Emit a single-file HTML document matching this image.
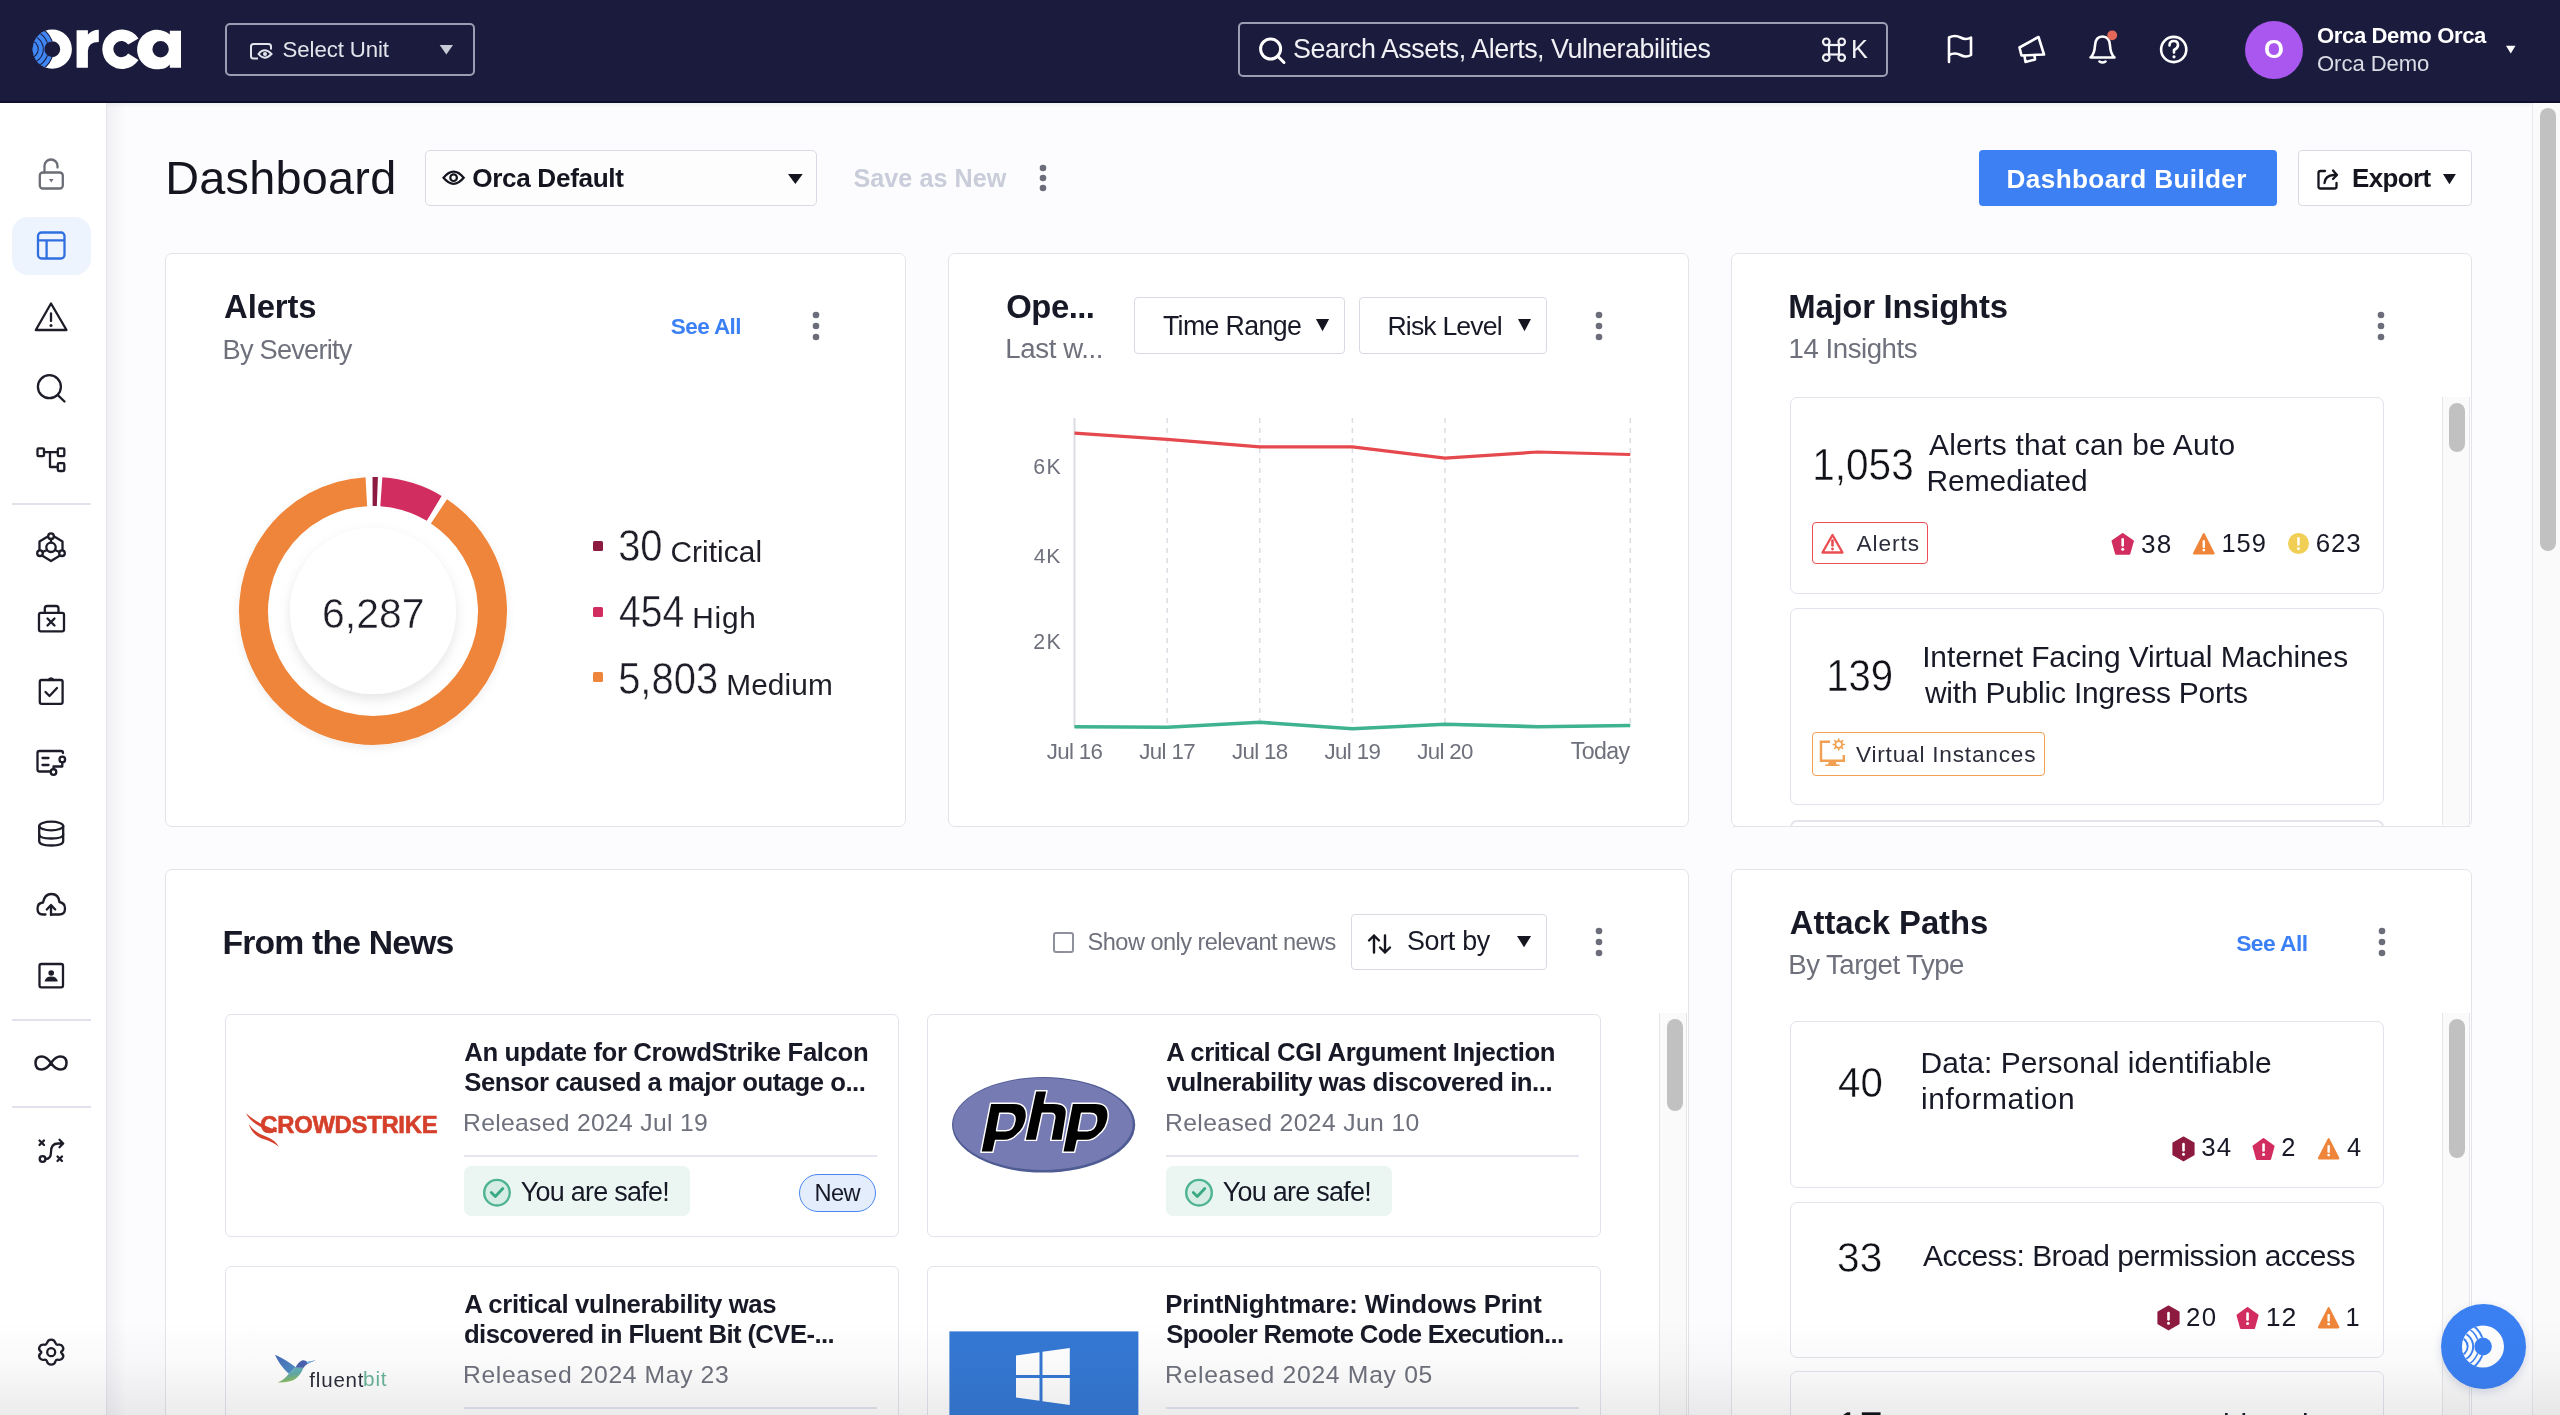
<!DOCTYPE html>
<html><head><meta charset="utf-8"><title>Orca Dashboard</title>
<style>
html,body{margin:0;padding:0;width:2560px;height:1415px;overflow:hidden;background:#fcfcfe}
body{position:relative;font-family:"Liberation Sans",sans-serif}
.a{position:absolute;box-sizing:border-box}
.t{position:absolute;white-space:nowrap;line-height:1;font-family:"Liberation Sans",sans-serif;-webkit-font-smoothing:antialiased}
svg.a{overflow:visible}
</style></head><body>
<div id="root" style="position:absolute;left:0;top:0;width:2560px;height:1415px;will-change:transform">
<div class="a" style="left:0px;top:0px;width:2560px;height:1415px;background:#fcfcfe"></div>
<div class="a" style="left:106px;top:103px;width:20px;height:1312px;background:linear-gradient(90deg,rgba(20,22,60,0.05),rgba(20,22,60,0.0))"></div>
<div class="a" style="left:106px;top:103px;width:2426px;height:5px;background:linear-gradient(180deg,rgba(20,22,60,0.05),rgba(20,22,60,0))"></div>
<div class="a" style="left:0px;top:103px;width:106px;height:1312px;background:#ffffff"></div>
<div class="a" style="left:105.5px;top:103px;width:1.5px;height:1312px;background:#e4e4ea"></div>
<div class="a" style="left:0px;top:0px;width:2560px;height:103px;background:#1b1c3d"></div>
<div class="a" style="left:0px;top:101px;width:2560px;height:2px;background:#0e0f2e"></div>
<div class="a" style="left:2532px;top:103px;width:28px;height:1312px;background:#fafafa;border-left:1.5px solid #e8e8ec"></div>
<div class="a" style="left:2540px;top:108px;width:16px;height:443px;background:#c1c1c1;border-radius:8px"></div>
<svg class="a" style="left:0px;top:0px;" width="200" height="100" viewBox="0 0 200 100">
<defs><clipPath id="lgclip"><path d="M52.3 29.6 A19.6 19.6 0 1 0 52.3 68.8 A19.6 19.6 0 1 0 52.3 29.6 Z M52.2 41.2 A8 8 0 1 1 52.2 57.2 A8 8 0 1 1 52.2 41.2 Z" fill-rule="evenodd" clip-rule="evenodd"/></clipPath>
</defs>
<g clip-path="url(#lgclip)">
  <rect x="30" y="25" width="50" height="50" fill="#ffffff"/>
  <circle cx="29.4" cy="49.2" r="24.6" fill="#1b1c3d"/>
  <circle cx="29.4" cy="49.2" r="23.5" fill="#3f86f6"/>
  <circle cx="29.4" cy="49.2" r="19.6" fill="#1b1c3d"/>
  <circle cx="29.4" cy="49.2" r="18.5" fill="#3f86f6"/>
  <circle cx="29.4" cy="49.2" r="14.4" fill="#1b1c3d"/>
  <circle cx="29.4" cy="49.2" r="13.4" fill="#3f86f6"/>
  <circle cx="29.4" cy="49.2" r="9.3" fill="#1b1c3d"/>
  <circle cx="29.4" cy="49.2" r="8.3" fill="#3f86f6"/>
</g>
<path d="M76.6 30.2 L87.9 30.2 L87.9 34.5 Q92 29.8 98.8 29.8 L98.8 42 Q88 42 87.9 51 L87.9 67.7 L76.6 67.7 Z" fill="#fff"/>
<path d="M138.5 38.5 A19.7 19.7 0 1 0 138.5 60 L128.2 53.5 A8.1 8.1 0 1 1 128.2 44.6 Z" fill="#fff"/>
<path d="M169.8 30.8 L181 30.8 L181 67.7 L169.8 67.7 L169.8 64.5 Q165.8 69 160.6 69 A19.8 19.8 0 1 1 169.8 34.5 Z M160.6 41 A8.2 8.2 0 1 0 160.6 57.4 A8.2 8.2 0 1 0 160.6 41 Z" fill="#fff" fill-rule="evenodd"/>
</svg>
<div class="a" style="left:225px;top:23px;width:250px;height:53px;border:2px solid #9c9db2;border-radius:5px"></div>
<svg class="a" style="left:240px;top:35px;" width="45" height="35" viewBox="240 35 45 35">
<path d="M258 58.5 L253.5 58.5 Q251 58.5 251 56 L251 46.5 Q251 44 253.5 44 L268.5 44 Q271 44 271 46.5 L271 49.5" fill="none" stroke="#e3e3ec" stroke-width="2"/>
<path d="M258.5 54 Q264.5 46.5 271.5 54 Q264.5 61.5 258.5 54 Z" fill="#1b1c3d" stroke="#e3e3ec" stroke-width="2"/>
<circle cx="265" cy="54" r="2" fill="#e3e3ec"/>
</svg>
<div class="t" style="left:282.6px;top:38.87px;font-size:22.24px;font-weight:400;color:#e3e3ec;letter-spacing:-0.11px;">Select Unit</div>
<svg class="a" style="left:430px;top:40px;" width="30" height="20" viewBox="430 40 30 20"><path d="M439.7 45 L453 45 L446.35 54.5 Z" fill="#c9cad8"/></svg>
<div class="a" style="left:1238px;top:22px;width:650px;height:55px;border:2px solid #9c9db2;border-radius:5px"></div>
<svg class="a" style="left:1250px;top:30px;" width="45" height="40" viewBox="1250 30 45 40"><circle cx="1270.6" cy="49" r="10" fill="none" stroke="#fff" stroke-width="3"/><path d="M1277.5 56 L1284 62.5" stroke="#fff" stroke-width="3" stroke-linecap="round"/></svg>
<div class="t" style="left:1293.05px;top:36.03px;font-size:26.89px;font-weight:400;color:#f0f0f5;letter-spacing:-0.47px;">Search Assets, Alerts, Vulnerabilities</div>
<svg class="a" style="left:1815px;top:33px;" width="37" height="33" viewBox="1815 33 37 33"><g fill="none" stroke="#f2f2f6" stroke-width="2.2">
<rect x="1829" y="45" width="10" height="9.5"/>
<circle cx="1826.3" cy="41.8" r="3.3"/><circle cx="1841.7" cy="41.8" r="3.3"/>
<circle cx="1826.3" cy="57.6" r="3.3"/><circle cx="1841.7" cy="57.6" r="3.3"/>
</g></svg>
<div class="t" style="left:1851px;top:37.39px;font-size:25.29px;font-weight:400;color:#f2f2f6;">K</div>
<svg class="a" style="left:1935px;top:25px;" width="265" height="50" viewBox="1935 25 265 50"><g fill="none" stroke="#ffffff" stroke-width="2.6" stroke-linecap="round" stroke-linejoin="round">
<path d="M1949 62 L1949 37.5 Q1955 34.5 1960.5 37.5 Q1966 40.5 1971 37.5 L1971 55 Q1966 58 1960.5 55 Q1955 52 1949 55"/>
<path d="M2019.5 47.5 L2038.5 37 L2044 54.5 L2021.5 55.5 Z"/>
<path d="M2024.5 56 L2025.5 62 L2035 59.5 L2034.5 55.5"/>
<path d="M2090.5 57.5 L2114.5 57.5 Q2110.5 54 2110 45.5 Q2109.5 36.5 2102.5 36.5 Q2095.5 36.5 2095 45.5 Q2094.5 54 2090.5 57.5 Z"/>
<path d="M2099.5 61.5 Q2102.5 63.5 2105.5 61.5"/>
<circle cx="2173.7" cy="49.5" r="12.6"/>
<path d="M2169.5 45.5 Q2169.5 41 2173.8 41 Q2178 41 2178 45 Q2178 48 2174 50 L2174 52.5"/>
</g>
<circle cx="2174" cy="56.8" r="1.6" fill="#fff"/>
<circle cx="2112.2" cy="35.3" r="4.9" fill="#e4685a"/></svg>
<div class="a" style="left:2245px;top:20.5px;width:58px;height:58px;background:#a957ef;border-radius:50%"></div>
<div class="t" style="left:2264px;top:36.94px;font-size:25.58px;font-weight:700;color:#ffffff;">O</div>
<div class="t" style="left:2317px;top:25.29px;font-size:22.09px;font-weight:700;color:#ffffff;letter-spacing:-0.38px;">Orca Demo Orca</div>
<div class="t" style="left:2317px;top:52.79px;font-size:22.09px;font-weight:400;color:#dcdce6;letter-spacing:-0.06px;">Orca Demo</div>
<svg class="a" style="left:2500px;top:40px;" width="20" height="20" viewBox="2500 40 20 20"><path d="M2506 45.8 L2515.5 45.8 L2510.75 53.4 Z" fill="#fff"/></svg>
<div class="a" style="left:12px;top:217px;width:79px;height:57.5px;background:#eef4fd;border-radius:16px"></div>
<div class="a" style="left:12px;top:502.6px;width:79px;height:2px;background:#e1e2ec"></div>
<div class="a" style="left:12px;top:1019px;width:79px;height:2px;background:#e1e2ec"></div>
<div class="a" style="left:12px;top:1106.4px;width:79px;height:2px;background:#e1e2ec"></div>
<svg class="a" style="left:0px;top:103px;" width="106" height="1312" viewBox="0 103 106 1312">
<g fill="none" stroke="#6b6d76" stroke-width="2.3" stroke-linecap="round" stroke-linejoin="round">
  <rect x="39.8" y="172.5" width="23" height="16" rx="3"/>
  <path d="M44.5 172.5 L44.5 166 A6.5 6.5 0 0 1 57.5 166 L57.5 167.5"/>
</g>
<path d="M49 179 L53.5 179 L51.25 182.5 Z" fill="#6b6d76"/>

<g fill="none" stroke="#2f6fe0" stroke-width="2.3" stroke-linejoin="round">
  <rect x="38" y="232.5" width="26.5" height="26" rx="3.5"/>
  <path d="M38 240.3 L64.5 240.3 M46.6 240.3 L46.6 258.5"/>
</g>

<g fill="none" stroke="#1c1d29" stroke-width="2.3" stroke-linecap="round" stroke-linejoin="round">
  <path d="M51 303.5 L35.8 330 L66.5 330 Z"/>
  <path d="M51 313.5 L51 321"/>
</g>
<circle cx="51" cy="325.6" r="1.5" fill="#1c1d29"/>

<g fill="none" stroke="#1c1d29" stroke-width="2.3" stroke-linecap="round" stroke-linejoin="round">
  <circle cx="49.4" cy="386.7" r="11.5"/>
  <path d="M57.8 395.2 L64.5 401.5"/>
</g>

<g fill="none" stroke="#1c1d29" stroke-width="2.3" stroke-linecap="round" stroke-linejoin="round">
  <rect x="37.5" y="448.3" width="6.5" height="7.8" rx="1.2"/>
  <rect x="57.8" y="448.3" width="6.5" height="7.8" rx="1.2"/>
  <rect x="57.8" y="463.2" width="6.5" height="7.8" rx="1.2"/>
  <path d="M44 452.2 L57.8 452.2 M50 452.2 L50 467 L57.8 467"/>
</g>

<g fill="none" stroke="#1c1d29" stroke-width="2.3" stroke-linecap="round" stroke-linejoin="round">
  <path d="M47.8 536.5 L39.5 541.5 L39.5 550 M42.8 556 L51 561 L59.2 556 M62.5 550 L62.5 541.5 L54.2 536.5"/>
  <circle cx="51" cy="547.3" r="4.7"/>
  <circle cx="51" cy="536.2" r="2.8"/>
  <circle cx="40" cy="553.2" r="2.8"/>
  <circle cx="62" cy="553.2" r="2.8"/>
  <path d="M51 539 L51 542.6 M42.6 552 L47 550 M59.4 552 L55 550"/>
</g>

<g fill="none" stroke="#1c1d29" stroke-width="2.3" stroke-linecap="round" stroke-linejoin="round">
  <rect x="39" y="612.8" width="25" height="18.5" rx="1.8"/>
  <path d="M44.8 612.5 L44.8 608.5 Q44.8 606 47.3 606 L56 606 Q58.5 606 58.5 608.5 L58.5 612.5"/>
  <path d="M47.5 618.5 L54.5 625.5 M54.5 618.5 L47.5 625.5"/>
</g>

<g fill="none" stroke="#1c1d29" stroke-width="2.3" stroke-linecap="round" stroke-linejoin="round">
  <rect x="39.8" y="680" width="22.8" height="23.8" rx="1.8"/>
  <path d="M48.7 680 A2.4 2.4 0 0 1 53.3 680"/>
  <path d="M45.5 692 L49.5 696 L57 688"/>
</g>

<g fill="none" stroke="#1c1d29" stroke-width="2.3" stroke-linecap="round" stroke-linejoin="round">
  <path d="M49.5 771.5 L39.5 771.5 Q37.5 771.5 37.5 769.5 L37.5 753 Q37.5 751 39.5 751 L61 751 Q63 751 63 753"/>
  <path d="M42.5 758 L48.5 758 M42.5 765 L48.5 765"/>
  <circle cx="62.3" cy="759.5" r="2.8"/>
  <circle cx="53.5" cy="772" r="2.8"/>
  <path d="M62.3 762.3 L62.3 766.5 L53.5 766.5 L53.5 769.2"/>
</g>

<g fill="none" stroke="#1c1d29" stroke-width="2.3" stroke-linecap="round" stroke-linejoin="round">
  <ellipse cx="51.2" cy="826" rx="12" ry="4.3"/>
  <path d="M39.2 826 L39.2 841 Q39.2 845.5 51.2 845.5 Q63.2 845.5 63.2 841 L63.2 826"/>
  <path d="M39.2 834.5 Q39.2 838.5 51.2 838.5 Q63.2 838.5 63.2 834.5"/>
</g>

<g fill="none" stroke="#1c1d29" stroke-width="2.3" stroke-linecap="round" stroke-linejoin="round">
  <path d="M45.5 914.5 L43 914.5 Q37.5 914.5 37.5 908.5 Q37.5 903 43 902.5 Q44.5 894 51.5 894 Q58.5 894 59.5 902 Q65 903 65 908.5 Q65 914.5 59 914.5 L51 914.5"/>
  <path d="M51 915 L51 905.5 M46.8 909.5 L51 905 L55.2 909.5"/>
</g>

<g fill="none" stroke="#1c1d29" stroke-width="2.3" stroke-linecap="round" stroke-linejoin="round">
  <rect x="39.5" y="964" width="23.5" height="23.3" rx="1.8"/>
</g>
<circle cx="51.2" cy="973" r="2.8" fill="#1c1d29"/>
<path d="M45.3 981 Q46.5 977 51.2 977 Q55.9 977 57.1 981 Z" fill="#1c1d29" stroke="#1c1d29" stroke-width="1.2" stroke-linejoin="round"/>

<g fill="none" stroke="#1c1d29" stroke-width="2.5" stroke-linecap="round">
  <path d="M51 1063 Q46.5 1056.5 41.7 1056.5 Q35.5 1056.5 35.5 1063 Q35.5 1069.5 41.7 1069.5 Q46.5 1069.5 51 1063 Q55.5 1056.5 60.3 1056.5 Q66.5 1056.5 66.5 1063 Q66.5 1069.5 60.3 1069.5 Q55.5 1069.5 51 1063"/>
</g>

<g fill="none" stroke="#1c1d29" stroke-width="2.3" stroke-linecap="round" stroke-linejoin="round">
  <circle cx="42.6" cy="1159" r="2.9"/>
  <path d="M45.5 1159 Q51 1159 51 1152 Q51 1143.5 58 1143.5 L62.5 1143.5 M59.5 1139.8 L63.2 1143.5 L59.5 1147.2"/>
  <path d="M39.5 1140.5 L44 1145 M44 1140.5 L39.5 1145 M57.5 1156.5 L62 1161 M62 1156.5 L57.5 1161"/>
</g>

<g fill="none" stroke="#1c1d29" stroke-width="2.3" stroke-linecap="round" stroke-linejoin="round">
  <path d="M51.2 1339.7 Q54.5 1339.7 55.5 1343.2 Q56.2 1345.2 58.3 1344.7 Q61.5 1344 62.8 1346.8 Q64.2 1349.5 61.8 1351.2 Q60.3 1352 61.8 1353.5 Q64.2 1355.5 62.8 1357.8 Q61.5 1360.5 58.3 1359.8 Q56.2 1359.3 55.5 1361.2 Q54.5 1364.7 51.2 1364.7 Q47.9 1364.7 46.9 1361.2 Q46.2 1359.3 44.1 1359.8 Q40.9 1360.5 39.6 1357.8 Q38.2 1355.5 40.6 1353.5 Q42.1 1352 40.6 1351.2 Q38.2 1349.5 39.6 1346.8 Q40.9 1344 44.1 1344.7 Q46.2 1345.2 46.9 1343.2 Q47.9 1339.7 51.2 1339.7 Z"/>
  <circle cx="51.2" cy="1352.2" r="4"/>
</g>
</svg>
<div class="t" style="left:165.25px;top:154.87px;font-size:46.8px;font-weight:400;color:#14151f;letter-spacing:0.25px;">Dashboard</div>
<div class="a" style="left:425px;top:150px;width:392px;height:56px;border:1.7px solid #d9dbe4;border-radius:5px;background:#fdfdfe"></div>
<svg class="a" style="left:440px;top:165px;" width="28" height="25" viewBox="440 165 28 25"><path d="M443.5 177.7 Q453.6 165.5 463.7 177.7 Q453.6 189.9 443.5 177.7 Z" fill="none" stroke="#14151f" stroke-width="2.2"/><circle cx="453.6" cy="177.7" r="3.3" fill="none" stroke="#14151f" stroke-width="2.2"/></svg>
<div class="t" style="left:472.2px;top:164.65px;font-size:26.16px;font-weight:700;color:#14151f;letter-spacing:-0.34px;">Orca Default</div>
<svg class="a" style="left:786.3px;top:171.6px;" width="18.7" height="13.9" viewBox="786.3 171.6 18.7 13.9"><path d="M788.3 173.6 L803 173.6 L795.65 183.5 Z" fill="#14151f"/></svg>
<div class="t" style="left:853.45px;top:166.01px;font-size:25.15px;font-weight:700;color:#c9cdd9;letter-spacing:0.05px;">Save as New</div>
<svg class="a" style="left:1037.3px;top:162px;" width="12" height="32" viewBox="1037.3 162 12 32"><g fill="#6c6d7a"><circle cx="1043.3" cy="168" r="3.3"/><circle cx="1043.3" cy="178.0" r="3.3"/><circle cx="1043.3" cy="188" r="3.3"/></g></svg>
<div class="a" style="left:1978.5px;top:150.3px;width:298.5px;height:55.4px;background:#3c80f4;border-radius:4px"></div>
<div class="t" style="left:2006.55px;top:166.05px;font-size:26.16px;font-weight:700;color:#ffffff;letter-spacing:0.37px;">Dashboard Builder</div>
<div class="a" style="left:2298.3px;top:150.3px;width:173.5px;height:55.4px;border:1.7px solid #d9dbe4;border-radius:4px;background:#ffffff"></div>
<svg class="a" style="left:2314px;top:166px;" width="28" height="26" viewBox="2314 166 28 26"><g fill="none" stroke="#14151f" stroke-width="2.3" stroke-linecap="round" stroke-linejoin="round"><path d="M2325 171 L2320.5 171 Q2318.5 171 2318.5 173 L2318.5 186.5 Q2318.5 188.5 2320.5 188.5 L2334.5 188.5 Q2336.5 188.5 2336.5 186.5 L2336.5 183"/><path d="M2324.5 183 Q2325 175.5 2334 175 L2337 175 M2333 170.5 L2337 175 L2333 179"/></g></svg>
<div class="t" style="left:2351.95px;top:166.04px;font-size:25.93px;font-weight:700;color:#14151f;letter-spacing:-0.59px;">Export</div>
<svg class="a" style="left:2440.7px;top:171.5px;" width="16.9" height="14.3" viewBox="2440.7 171.5 16.9 14.3"><path d="M2442.7 173.5 L2455.6 173.5 L2449.1499999999996 183.8 Z" fill="#14151f"/></svg>
<div class="a" style="left:165.3px;top:252.6px;width:741px;height:574px;background:#ffffff;border:1.8px solid #e3e4e9;border-radius:7px"></div>
<div class="a" style="left:948.3px;top:252.6px;width:741px;height:574px;background:#ffffff;border:1.8px solid #e3e4e9;border-radius:7px"></div>
<div class="a" style="left:1731.3px;top:252.6px;width:741px;height:574px;background:#ffffff;border:1.8px solid #e3e4e9;border-radius:7px"></div>
<div class="a" style="left:165.3px;top:868.6px;width:1524px;height:700px;background:#ffffff;border:1.8px solid #e3e4e9;border-radius:7px"></div>
<div class="a" style="left:1731.3px;top:868.6px;width:741px;height:700px;background:#ffffff;border:1.8px solid #e3e4e9;border-radius:7px"></div>
<div class="t" style="left:224.05px;top:291.09px;font-size:32.85px;font-weight:700;color:#181926;letter-spacing:-0.11px;">Alerts</div>
<div class="t" style="left:222.55px;top:335.57px;font-size:27.2px;font-weight:400;color:#6e707c;letter-spacing:-0.76px;">By Severity</div>
<div class="t" style="left:670.85px;top:316.24px;font-size:22.51px;font-weight:700;color:#3b80f4;letter-spacing:-0.6px;">See All</div>
<svg class="a" style="left:810px;top:309px;" width="12" height="34" viewBox="810 309 12 34"><g fill="#6c6d7a"><circle cx="816" cy="315" r="3.3"/><circle cx="816" cy="326.0" r="3.3"/><circle cx="816" cy="337" r="3.3"/></g></svg>
<svg class="a" style="left:233px;top:471px;" width="280" height="280" viewBox="233 471 280 280">
<defs>
<filter id="dsh" x="-30%" y="-30%" width="160%" height="160%"><feDropShadow dx="0" dy="5" stdDeviation="6" flood-color="#000" flood-opacity="0.10"/></filter>
<filter id="rsh" x="-20%" y="-20%" width="140%" height="140%"><feDropShadow dx="0" dy="3" stdDeviation="4" flood-color="#000" flood-opacity="0.07"/></filter>
</defs>
<circle cx="373" cy="611" r="134" fill="#ffffff" filter="url(#rsh)"/>
<circle cx="373" cy="611" r="83" fill="#ffffff" filter="url(#dsh)"/>
<path d="M372.58 491.50 A119.5 119.5 0 0 1 377.38 491.58" fill="none" stroke="#8d1b40" stroke-width="29"/>
<path d="M381.34 491.79 A119.5 119.5 0 0 1 434.19 508.35" fill="none" stroke="#d22d60" stroke-width="29"/>
<path d="M438.96 511.35 A119.5 119.5 0 1 1 366.33 491.69" fill="none" stroke="#ee853a" stroke-width="29"/>
</svg>
<div class="t" style="left:321.75px;top:591.57px;font-size:43.02px;font-weight:400;color:#1d1e28;transform:scaleX(0.95);transform-origin:2.25px 0;-webkit-text-stroke:0.45px #ffffff;">6,287</div>
<div class="a" style="left:593.2px;top:540.8px;width:10px;height:10px;background:#8d1b40;border-radius:1.5px"></div>
<div class="t" style="left:618.25px;top:524.43px;font-size:43.9px;font-weight:400;color:#1d1e28;transform:scaleX(0.91);transform-origin:1.75px 0;-webkit-text-stroke:0.45px #ffffff;">30</div>
<div class="t" style="left:670.5px;top:537.37px;font-size:29.8px;font-weight:400;color:#1d1e28;letter-spacing:0.07px;">Critical</div>
<div class="a" style="left:593.2px;top:606.6px;width:10px;height:10px;background:#d22d60;border-radius:1.5px"></div>
<div class="t" style="left:619px;top:590.23px;font-size:43.9px;font-weight:400;color:#1d1e28;transform:scaleX(0.89);transform-origin:1px 0;-webkit-text-stroke:0.45px #ffffff;">454</div>
<div class="t" style="left:692.3px;top:603.17px;font-size:29.8px;font-weight:400;color:#1d1e28;letter-spacing:0.73px;">High</div>
<div class="a" style="left:593.2px;top:672px;width:10px;height:10px;background:#ee853a;border-radius:1.5px"></div>
<div class="t" style="left:618.25px;top:656.83px;font-size:43.9px;font-weight:400;color:#1d1e28;transform:scaleX(0.91);transform-origin:1.75px 0;-webkit-text-stroke:0.45px #ffffff;">5,803</div>
<div class="t" style="left:726.3px;top:669.77px;font-size:29.8px;font-weight:400;color:#1d1e28;letter-spacing:0.09px;">Medium</div>
<div class="t" style="left:1006.35px;top:291.09px;font-size:32.85px;font-weight:700;color:#181926;letter-spacing:-0.52px;">Ope...</div>
<div class="t" style="left:1005.35px;top:335.22px;font-size:27.62px;font-weight:400;color:#6e707c;letter-spacing:-0.39px;">Last w...</div>
<div class="a" style="left:1133.5px;top:297.1px;width:211px;height:56.6px;border:1.7px solid #d9dbe4;border-radius:4px;background:#fff"></div>
<div class="t" style="left:1162.9px;top:312.66px;font-size:26.73px;font-weight:400;color:#181926;letter-spacing:-0.63px;">Time Range</div>
<svg class="a" style="left:1314.3px;top:316.9px;" width="17.1" height="16.3" viewBox="1314.3 316.9 17.1 16.3"><path d="M1316.3 318.9 L1329.4 318.9 L1322.85 331.2 Z" fill="#14151f"/></svg>
<div class="a" style="left:1359.4px;top:297.1px;width:187.5px;height:56.6px;border:1.7px solid #d9dbe4;border-radius:4px;background:#fff"></div>
<div class="t" style="left:1387.45px;top:312.75px;font-size:26.63px;font-weight:400;color:#181926;letter-spacing:-0.84px;">Risk Level</div>
<svg class="a" style="left:1516px;top:316.9px;" width="17" height="16.3" viewBox="1516 316.9 17 16.3"><path d="M1518 318.9 L1531 318.9 L1524.5 331.2 Z" fill="#14151f"/></svg>
<svg class="a" style="left:1592.7px;top:309px;" width="12" height="34" viewBox="1592.7 309 12 34"><g fill="#6c6d7a"><circle cx="1598.7" cy="315" r="3.3"/><circle cx="1598.7" cy="326.0" r="3.3"/><circle cx="1598.7" cy="337" r="3.3"/></g></svg>
<svg class="a" style="left:1060px;top:410px;" width="585" height="330" viewBox="1060 410 585 330"><path d="M1167.13 418 L1167.13 728" stroke="#dcdde3" stroke-width="1.5" stroke-dasharray="5 5"/><path d="M1259.76 418 L1259.76 728" stroke="#dcdde3" stroke-width="1.5" stroke-dasharray="5 5"/><path d="M1352.39 418 L1352.39 728" stroke="#dcdde3" stroke-width="1.5" stroke-dasharray="5 5"/><path d="M1445.02 418 L1445.02 728" stroke="#dcdde3" stroke-width="1.5" stroke-dasharray="5 5"/><path d="M1630.28 418 L1630.28 728" stroke="#dcdde3" stroke-width="1.5" stroke-dasharray="5 5"/><path d="M1074.50 418 L1074.50 728" stroke="#dcdde3" stroke-width="2"/><path d="M1074.50 433.20 L1167.13 439.40 L1259.76 446.80 L1352.39 446.80 L1445.02 458.20 L1537.65 452.00 L1630.28 454.50" fill="none" stroke="#e5484d" stroke-width="3.2" stroke-linejoin="round"/><path d="M1074.50 726.70 L1167.13 727.20 L1259.76 722.20 L1352.39 728.80 L1445.02 724.30 L1537.65 726.70 L1630.28 725.50" fill="none" stroke="#3fb38f" stroke-width="3.6" stroke-linejoin="round"/></svg>
<div class="t" style="left:1033.3px;top:457.4px;font-size:21.37px;font-weight:400;color:#6e707c;letter-spacing:1.2px;">6K</div>
<div class="t" style="left:1033.8px;top:544.96px;font-size:21.08px;font-weight:400;color:#6e707c;letter-spacing:0.7px;">4K</div>
<div class="t" style="left:1033.3px;top:632.4px;font-size:21.37px;font-weight:400;color:#6e707c;letter-spacing:1.2px;">2K</div>
<div class="t" style="left:1046.7px;top:740.62px;font-size:22.3px;font-weight:400;color:#6e707c;letter-spacing:-0.68px;">Jul 16</div>
<div class="t" style="left:1139.33px;top:740.62px;font-size:22.3px;font-weight:400;color:#6e707c;letter-spacing:-0.63px;">Jul 17</div>
<div class="t" style="left:1231.96px;top:740.62px;font-size:22.3px;font-weight:400;color:#6e707c;letter-spacing:-0.68px;">Jul 18</div>
<div class="t" style="left:1324.59px;top:740.62px;font-size:22.3px;font-weight:400;color:#6e707c;letter-spacing:-0.63px;">Jul 19</div>
<div class="t" style="left:1417.22px;top:740.62px;font-size:22.3px;font-weight:400;color:#6e707c;letter-spacing:-0.68px;">Jul 20</div>
<div class="t" style="left:1570.8px;top:739.89px;font-size:23.16px;font-weight:400;color:#6e707c;letter-spacing:-0.62px;">Today</div>
<div class="t" style="left:1788.25px;top:291.09px;font-size:32.85px;font-weight:700;color:#181926;letter-spacing:-0.22px;">Major Insights</div>
<div class="t" style="left:1788.5px;top:335.22px;font-size:27.62px;font-weight:400;color:#6e707c;letter-spacing:-0.45px;">14 Insights</div>
<svg class="a" style="left:2375.3px;top:309px;" width="12" height="34" viewBox="2375.3 309 12 34"><g fill="#6c6d7a"><circle cx="2381.3" cy="315" r="3.3"/><circle cx="2381.3" cy="326.0" r="3.3"/><circle cx="2381.3" cy="337" r="3.3"/></g></svg>
<div class="a" style="left:1789.6px;top:396.8px;width:594px;height:197px;background:#fff;border:1.6px solid #e2e3eb;border-radius:7px"></div>
<div class="t" style="left:1812.05px;top:443.58px;font-size:43.6px;font-weight:400;color:#111218;transform:scaleX(0.93);transform-origin:3.25px 0;-webkit-text-stroke:0.45px #ffffff;">1,053</div>
<div class="t" style="left:1929px;top:429.95px;font-size:29.94px;font-weight:400;color:#181926;letter-spacing:0.22px;">Alerts that can be Auto</div>
<div class="t" style="left:1926.5px;top:466.45px;font-size:29.94px;font-weight:400;color:#181926;letter-spacing:-0.03px;">Remediated</div>
<div class="a" style="left:1812.2px;top:522.4px;width:115.6px;height:42px;border:1.7px solid #ea4d52;border-radius:4px"></div>
<svg class="a" style="left:1818px;top:530px;" width="30" height="28" viewBox="1818 530 30 28"><path d="M1832.5 535 L1822.5 552.5 L1842.5 552.5 Z" fill="none" stroke="#ea4d52" stroke-width="2.3" stroke-linejoin="round"/><path d="M1832.5 540.5 L1832.5 545.5" stroke="#ea4d52" stroke-width="2.6" stroke-linecap="round"/><circle cx="1832.5" cy="549" r="1.4" fill="#ea4d52"/></svg>
<div class="t" style="left:1856.5px;top:532px;font-size:22.67px;font-weight:400;color:#2b2d3a;letter-spacing:0.95px;">Alerts</div>
<svg class="a" style="left:2109px;top:529.6px;" width="27.4" height="27.3" viewBox="2109 529.6 27.4 27.3"><path d="M2122.70 533.60 L2132.90 540.69 L2129.33 553.40 L2116.07 553.40 L2112.50 540.69 Z" fill="#d22d60" stroke="#d22d60" stroke-width="2" stroke-linejoin="round"/><path d="M2122.7 538.99 L2122.7 544.954" stroke="#fff" stroke-width="2.6" stroke-linecap="round"/><circle cx="2122.7" cy="548.788" r="1.5" fill="#fff"/></svg>
<div class="t" style="left:2141px;top:530.68px;font-size:26.12px;font-weight:400;color:#181926;letter-spacing:1.25px;">38</div>
<svg class="a" style="left:2189.7px;top:529.6px;" width="27.6" height="27.4" viewBox="2189.7 529.6 27.6 27.4"><path d="M2203.50 533.80 L2213.30 553.00 L2193.70 553.00 Z" fill="#ee853a" stroke="#ee853a" stroke-width="2.2" stroke-linejoin="round"/><path d="M2203.5 540.732 L2203.5 546.296" stroke="#fff" stroke-width="2.4" stroke-linecap="round"/><circle cx="2203.5" cy="549.72" r="1.4" fill="#fff"/></svg>
<div class="t" style="left:2221.6px;top:531.26px;font-size:25.44px;font-weight:400;color:#181926;letter-spacing:0.88px;">159</div>
<svg class="a" style="left:2284.9px;top:529.6px;" width="27" height="27" viewBox="2284.9 529.6 27 27"><circle cx="2298.4" cy="543.1" r="10.5" fill="#f1cf55"/><path d="M2298.4 537.85 L2298.4 544.15" stroke="#fff" stroke-width="2.4" stroke-linecap="round"/><circle cx="2298.4" cy="548.35" r="1.4" fill="#fff"/></svg>
<div class="t" style="left:2315.75px;top:530.87px;font-size:25.9px;font-weight:400;color:#181926;letter-spacing:0.9px;">623</div>
<div class="a" style="left:1789.6px;top:608px;width:594px;height:197px;background:#fff;border:1.6px solid #e2e3eb;border-radius:7px"></div>
<div class="t" style="left:1826.45px;top:654.78px;font-size:43.6px;font-weight:400;color:#111218;transform:scaleX(0.92);transform-origin:3.25px 0;-webkit-text-stroke:0.45px #ffffff;">139</div>
<div class="t" style="left:1922.15px;top:641.65px;font-size:29.94px;font-weight:400;color:#181926;letter-spacing:-0.09px;">Internet Facing Virtual Machines</div>
<div class="t" style="left:1924.9px;top:678.25px;font-size:29.94px;font-weight:400;color:#181926;letter-spacing:-0.2px;">with Public Ingress Ports</div>
<div class="a" style="left:1812.2px;top:732.4px;width:232.4px;height:43.3px;border:1.7px solid #f0a050;border-radius:4px"></div>
<svg class="a" style="left:1815px;top:735px;" width="35" height="35" viewBox="1815 735 35 35"><g fill="none" stroke="#f0a050" stroke-width="2.4">
<path d="M1830 741.8 L1821 741.8 L1821 760.8 L1843.8 760.8 L1843.8 755"/>
<circle cx="1838.7" cy="744.5" r="3.4" stroke-width="1.8"/>
</g>
<path d="M1828.8 762 L1835.8 762 L1836.5 764.5 L1839.5 764.5 L1839.5 766 L1825.2 766 L1825.2 764.5 L1828 764.5 Z" fill="#f0a050"/>
<g stroke="#f0a050" stroke-width="1.6" stroke-linecap="round">
<path d="M1838.7 739 L1838.7 740.2 M1838.7 748.8 L1838.7 750 M1833.2 744.5 L1834.4 744.5 M1843 744.5 L1844.2 744.5 M1834.8 740.6 L1835.6 741.4 M1841.8 747.6 L1842.6 748.4 M1834.8 748.4 L1835.6 747.6 M1841.8 741.4 L1842.6 740.6"/>
</g></svg>
<div class="t" style="left:1855.95px;top:742.9px;font-size:22.67px;font-weight:400;color:#2b2d3a;letter-spacing:0.78px;">Virtual Instances</div>
<div class="a" style="left:1789.6px;top:819.5px;width:594px;height:7px;background:#fff;border:2px solid #e4e5ec;border-bottom:none;border-radius:7px 7px 0 0"></div>
<div class="a" style="left:1733px;top:825.5px;width:737px;height:1.5px;background:#e3e4e9"></div>
<div class="a" style="left:2441.6px;top:397px;width:28.7px;height:428px;background:#fafafa;border-left:1.5px solid #e6e6ea;border-right:1.5px solid #e6e6ea"></div>
<div class="a" style="left:2449.1px;top:403px;width:16px;height:48.7px;background:#c1c1c1;border-radius:8px"></div>
<div class="t" style="left:222.45px;top:925.55px;font-size:33.72px;font-weight:700;color:#181926;letter-spacing:-0.82px;">From the News</div>
<div class="a" style="left:1052.5px;top:931.8px;width:21.2px;height:21.5px;border:2px solid #8e909b;border-radius:3px;background:#fff"></div>
<div class="t" style="left:1087.6px;top:931.04px;font-size:23.57px;font-weight:400;color:#6e707c;letter-spacing:-0.54px;">Show only relevant news</div>
<div class="a" style="left:1350.6px;top:914.1px;width:196.1px;height:55.7px;border:1.7px solid #d9dbe4;border-radius:4px;background:#fff"></div>
<svg class="a" style="left:1364px;top:930px;" width="31" height="28" viewBox="1364 930 31 28"><g fill="none" stroke="#14151f" stroke-width="2.4" stroke-linecap="round" stroke-linejoin="round"><path d="M1374 952.5 L1374 935.5 M1369 940.5 L1374 935.5 L1379 940.5"/><path d="M1385 935.5 L1385 952.5 M1380 947.5 L1385 952.5 L1390 947.5"/></g></svg>
<div class="t" style="left:1406.95px;top:928.23px;font-size:26.89px;font-weight:400;color:#181926;letter-spacing:-0.31px;">Sort by</div>
<svg class="a" style="left:1514.9px;top:933.7px;" width="18.1" height="15.3" viewBox="1514.9 933.7 18.1 15.3"><path d="M1516.9 935.7 L1531 935.7 L1523.95 947 Z" fill="#14151f"/></svg>
<svg class="a" style="left:1593.2px;top:925px;" width="12" height="34" viewBox="1593.2 925 12 34"><g fill="#6c6d7a"><circle cx="1599.2" cy="931" r="3.3"/><circle cx="1599.2" cy="942.0" r="3.3"/><circle cx="1599.2" cy="953" r="3.3"/></g></svg>
<div class="a" style="left:1659.2px;top:1013px;width:27.8px;height:402px;background:#fafafa;border-left:1.5px solid #e6e6ea;border-right:1.5px solid #e6e6ea"></div>
<div class="a" style="left:1666.7px;top:1018.8px;width:16px;height:92.2px;background:#c1c1c1;border-radius:8px"></div>
<div class="a" style="left:167px;top:870px;width:1490px;height:545px;overflow:hidden">
<div class="a" style="left:-167px;top:-870px;width:2560px;height:1415px">
<div class="a" style="left:224.7px;top:1013.7px;width:674px;height:223px;background:#fff;border:1.6px solid #e2e3eb;border-radius:6px"></div>
<svg class="a" style="left:240px;top:1108px;" width="45" height="44" viewBox="240 1108 45 44">
<path d="M246 1113.3 Q252 1126 276.5 1132.5 L277 1130.5 Q257 1123.5 246 1113.3 Z" fill="#d5402b"/>
<path d="M248.8 1124 Q252 1135.5 265 1139.5 Q273.5 1142 278.8 1147 Q275.5 1140 266 1136.5 Q253.5 1132 248.8 1124 Z" fill="#d5402b"/></svg>
<div class="t" style="left:260.3px;top:1112.52px;font-size:23.84px;font-weight:700;color:#d5402b;letter-spacing:-0.28px;-webkit-text-stroke:0.6px #d5402b;">CROWDSTRIKE</div>
<div class="t" style="left:464.25px;top:1040.12px;font-size:25.73px;font-weight:700;color:#181926;letter-spacing:-0.37px;">An update for CrowdStrike Falcon</div>
<div class="t" style="left:464.25px;top:1070.32px;font-size:25.73px;font-weight:700;color:#181926;letter-spacing:-0.49px;">Sensor caused a major outage o...</div>
<div class="t" style="left:463px;top:1111.48px;font-size:24.71px;font-weight:400;color:#6e707c;letter-spacing:0.3px;">Released 2024 Jul 19</div>
<div class="a" style="left:464px;top:1155.3px;width:412.5px;height:1.6px;background:#e4e5ee"></div>
<div class="a" style="left:463.5px;top:1166px;width:226px;height:49.5px;background:#ebf6f2;border-radius:7px"></div>
<svg class="a" style="left:480.5px;top:1176.5px;" width="33" height="33" viewBox="480.5 1176.5 33 33"><circle cx="496.5" cy="1192.2" r="12.8" fill="#d5ede4" stroke="#4db393" stroke-width="2.4"/><path d="M490.8 1192.0 l4 4 l7.5 -8" fill="none" stroke="#3aa981" stroke-width="2.8" stroke-linecap="round" stroke-linejoin="round"/></svg>
<div class="t" style="left:520.75px;top:1179.18px;font-size:26.95px;font-weight:400;color:#181926;letter-spacing:-0.73px;">You are safe!</div>
<div class="a" style="left:798.5px;top:1174.4px;width:77px;height:37.3px;background:#e4edfc;border:1.8px solid #4b86f0;border-radius:19px"></div>
<div class="t" style="left:814.5px;top:1181.97px;font-size:23.66px;font-weight:400;color:#181926;letter-spacing:-0.65px;">New</div>
<div class="a" style="left:926.7px;top:1013.7px;width:674px;height:223px;background:#fff;border:1.6px solid #e2e3eb;border-radius:6px"></div>
<svg class="a" style="left:945px;top:1070px;" width="200" height="110" viewBox="945 1070 200 110">
<defs><linearGradient id="phpg" x1="0" y1="0" x2="1" y2="1"><stop offset="0.55" stop-color="#777bb3"/><stop offset="1" stop-color="#4f5b93"/></linearGradient></defs>
<ellipse cx="1043.6" cy="1124.8" rx="91.6" ry="47.8" fill="#4f5b93"/>
<ellipse cx="1043" cy="1124" rx="89.8" ry="46" fill="#777bb3"/>
<g transform="translate(940,1060) scale(0.09186)" fill="#000" stroke="#fff" stroke-width="16" stroke-linejoin="round" fill-rule="evenodd">
<path d="M550 470 L800 470 Q955 470 940 625 Q925 745 840 810 Q775 875 700 875 L605 875 L575 1005 L445 1005 Z M650 580 L745 580 Q830 580 815 665 Q798 770 715 770 L615 770 Z"/>
<path d="M1040 335 L1165 335 L1135 470 L1240 470 Q1395 470 1375 600 L1330 875 L1205 875 L1250 630 Q1258 580 1205 580 L1112 580 L1050 875 L925 875 Z"/>
<path d="M1440 470 L1690 470 Q1845 470 1830 625 Q1815 745 1730 810 Q1665 875 1590 875 L1495 875 L1465 1005 L1335 1005 Z M1540 580 L1635 580 Q1720 580 1705 665 Q1688 770 1605 770 L1505 770 Z"/>
</g></svg>
<div class="t" style="left:1166.25px;top:1040.12px;font-size:25.73px;font-weight:700;color:#181926;letter-spacing:-0.37px;">A critical CGI Argument Injection</div>
<div class="t" style="left:1166.75px;top:1070.32px;font-size:25.73px;font-weight:700;color:#181926;letter-spacing:-0.48px;">vulnerability was discovered in...</div>
<div class="t" style="left:1165px;top:1111.48px;font-size:24.71px;font-weight:400;color:#6e707c;letter-spacing:0.37px;">Released 2024 Jun 10</div>
<div class="a" style="left:1166px;top:1155.3px;width:412.5px;height:1.6px;background:#e4e5ee"></div>
<div class="a" style="left:1165.5px;top:1166px;width:226px;height:49.5px;background:#ebf6f2;border-radius:7px"></div>
<svg class="a" style="left:1182.5px;top:1176.5px;" width="33" height="33" viewBox="1182.5 1176.5 33 33"><circle cx="1198.5" cy="1192.2" r="12.8" fill="#d5ede4" stroke="#4db393" stroke-width="2.4"/><path d="M1192.8 1192.0 l4 4 l7.5 -8" fill="none" stroke="#3aa981" stroke-width="2.8" stroke-linecap="round" stroke-linejoin="round"/></svg>
<div class="t" style="left:1222.75px;top:1179.18px;font-size:26.95px;font-weight:400;color:#181926;letter-spacing:-0.73px;">You are safe!</div>
<div class="a" style="left:224.7px;top:1265.7px;width:674px;height:223px;background:#fff;border:1.6px solid #e2e3eb;border-radius:6px"></div>
<svg class="a" style="left:268px;top:1345px;" width="52" height="45" viewBox="268 1345 52 45">
<defs><linearGradient id="fbg" x1="0" y1="0" x2="0.3" y2="1"><stop offset="0" stop-color="#5fb6c6"/><stop offset="0.55" stop-color="#62aaa8"/><stop offset="1" stop-color="#8fbf5c"/></linearGradient>
<linearGradient id="fbw" x1="0" y1="0" x2="1" y2="1"><stop offset="0" stop-color="#4565b8"/><stop offset="1" stop-color="#4f95c4"/></linearGradient></defs>
<g transform="translate(268,1345) scale(0.05079)">
<path d="M140 190 Q160 250 250 390 Q330 500 410 565 L545 440 Q380 300 140 190 Z" fill="url(#fbw)"/>
<path d="M410 565 L545 440 L700 445 Q650 580 545 665 Q420 745 190 738 Q330 680 410 565 Z" fill="url(#fbg)"/>
<path d="M540 445 Q600 330 680 300 Q740 295 775 335 L940 302 Q850 335 775 372 Q725 400 700 450 Z" fill="#4b62ae"/>
<path d="M760 335 L940 302 Q850 335 775 368 Z" fill="#7cc0e6"/>
</g>
</svg>
<div class="t" style="left:309.35px;top:1369.62px;font-size:20.53px;font-weight:400;color:#2b2d3a;letter-spacing:0.79px;">fluent</div>
<div class="t" style="left:363.05px;top:1369.43px;font-size:20.76px;font-weight:400;color:#6ab59b;letter-spacing:0.82px;">bit</div>
<div class="t" style="left:464.25px;top:1292.12px;font-size:25.73px;font-weight:700;color:#181926;letter-spacing:-0.36px;">A critical vulnerability was</div>
<div class="t" style="left:464px;top:1322.32px;font-size:25.73px;font-weight:700;color:#181926;letter-spacing:-0.61px;">discovered in Fluent Bit (CVE-...</div>
<div class="t" style="left:463px;top:1363.48px;font-size:24.71px;font-weight:400;color:#6e707c;letter-spacing:0.61px;">Released 2024 May 23</div>
<div class="a" style="left:464px;top:1407.3px;width:412.5px;height:1.6px;background:#e4e5ee"></div>
<div class="a" style="left:926.7px;top:1265.7px;width:674px;height:223px;background:#fff;border:1.6px solid #e2e3eb;border-radius:6px"></div>
<svg class="a" style="left:945px;top:1325px;" width="200" height="90" viewBox="945 1325 200 90">
<rect x="949.4" y="1331.4" width="189" height="90" fill="#3478d4"/>
<g fill="#ffffff">
<path d="M1016 1355.5 L1039.5 1352.3 L1039.5 1375 L1016 1375 Z"/>
<path d="M1042.5 1351.8 L1069.8 1348 L1069.8 1375 L1042.5 1375 Z"/>
<path d="M1016 1378 L1039.5 1378 L1039.5 1400.7 L1016 1397.5 Z"/>
<path d="M1042.5 1378 L1069.8 1378 L1069.8 1405 L1042.5 1401.2 Z"/>
</g></svg>
<div class="t" style="left:1165.25px;top:1292.12px;font-size:25.73px;font-weight:700;color:#181926;letter-spacing:-0.12px;">PrintNightmare: Windows Print</div>
<div class="t" style="left:1166.25px;top:1322.32px;font-size:25.73px;font-weight:700;color:#181926;letter-spacing:-0.72px;">Spooler Remote Code Execution...</div>
<div class="t" style="left:1165px;top:1363.48px;font-size:24.71px;font-weight:400;color:#6e707c;letter-spacing:0.7px;">Released 2024 May 05</div>
<div class="a" style="left:1166px;top:1407.3px;width:412.5px;height:1.6px;background:#e4e5ee"></div>
</div></div>
<div class="t" style="left:1789.85px;top:906.69px;font-size:32.85px;font-weight:700;color:#181926;letter-spacing:-0.04px;">Attack Paths</div>
<div class="t" style="left:1788.35px;top:951.12px;font-size:27.62px;font-weight:400;color:#6e707c;letter-spacing:-0.55px;">By Target Type</div>
<div class="t" style="left:2236.15px;top:931.66px;font-size:22.84px;font-weight:700;color:#3b80f4;letter-spacing:-0.56px;">See All</div>
<svg class="a" style="left:2376px;top:925px;" width="12" height="34" viewBox="2376 925 12 34"><g fill="#6c6d7a"><circle cx="2382" cy="931" r="3.3"/><circle cx="2382" cy="942.0" r="3.3"/><circle cx="2382" cy="953" r="3.3"/></g></svg>
<div class="a" style="left:1733px;top:1013px;width:708px;height:402px;overflow:hidden">
<div class="a" style="left:-1733px;top:-1013px;width:2560px;height:1415px">
<div class="a" style="left:1789.8px;top:1021.2px;width:594px;height:167px;background:#fff;border:1.6px solid #e2e3eb;border-radius:7px"></div>
<div class="t" style="left:1837.8px;top:1061.12px;font-size:42.73px;font-weight:400;color:#111218;transform:scaleX(0.94);transform-origin:1px 0;-webkit-text-stroke:0.45px #ffffff;">40</div>
<div class="t" style="left:1920.6px;top:1048.35px;font-size:29.94px;font-weight:400;color:#181926;letter-spacing:0.06px;">Data: Personal identifiable</div>
<div class="t" style="left:1921.1px;top:1084.15px;font-size:29.94px;font-weight:400;color:#181926;letter-spacing:0.54px;">information</div>
<svg class="a" style="left:2170px;top:1133.5px;" width="27" height="29.8" viewBox="2170 1133.5 27 29.8"><path d="M2183.50 1136.50 L2194.00 1142.45 L2194.00 1154.35 L2183.50 1160.30 L2173.00 1154.35 L2173.00 1142.45 Z" fill="#8d1b40" stroke="#8d1b40" stroke-width="1.2" stroke-linejoin="round"/><path d="M2183.5 1143.6399999999999 L2183.5 1149.828" stroke="#fff" stroke-width="2.6" stroke-linecap="round"/><circle cx="2183.5" cy="1153.874" r="1.5" fill="#fff"/></svg>
<div class="t" style="left:2201.2px;top:1135.05px;font-size:25.92px;font-weight:400;color:#181926;letter-spacing:1.05px;">34</div>
<svg class="a" style="left:2249.9px;top:1134.7px;" width="27.1" height="27.6" viewBox="2249.9 1134.7 27.1 27.6"><path d="M2263.45 1138.70 L2273.50 1145.91 L2269.99 1158.80 L2256.91 1158.80 L2253.40 1145.91 Z" fill="#d22d60" stroke="#d22d60" stroke-width="2" stroke-linejoin="round"/><path d="M2263.45 1144.18 L2263.45 1150.228" stroke="#fff" stroke-width="2.6" stroke-linecap="round"/><circle cx="2263.45" cy="1154.116" r="1.5" fill="#fff"/></svg>
<div class="t" style="left:2281.35px;top:1135.46px;font-size:25.44px;font-weight:400;color:#181926;">2</div>
<svg class="a" style="left:2314.5px;top:1134.7px;" width="27.3" height="27.3" viewBox="2314.5 1134.7 27.3 27.3"><path d="M2328.15 1138.90 L2337.80 1158.00 L2318.50 1158.00 Z" fill="#ee853a" stroke="#ee853a" stroke-width="2.2" stroke-linejoin="round"/><path d="M2328.15 1145.794 L2328.15 1151.332" stroke="#fff" stroke-width="2.4" stroke-linecap="round"/><circle cx="2328.15" cy="1154.74" r="1.4" fill="#fff"/></svg>
<div class="t" style="left:2346.9px;top:1135.46px;font-size:25.44px;font-weight:400;color:#181926;">4</div>
<div class="a" style="left:1789.8px;top:1202.2px;width:594px;height:156px;background:#fff;border:1.6px solid #e2e3eb;border-radius:7px"></div>
<div class="t" style="left:1837.05px;top:1235.62px;font-size:42.73px;font-weight:400;color:#111218;transform:scaleX(0.95);transform-origin:1.75px 0;-webkit-text-stroke:0.45px #ffffff;">33</div>
<div class="t" style="left:1923.1px;top:1240.55px;font-size:29.94px;font-weight:400;color:#181926;letter-spacing:-0.51px;">Access: Broad permission access</div>
<svg class="a" style="left:2155px;top:1302.5px;" width="27" height="29.8" viewBox="2155 1302.5 27 29.8"><path d="M2168.50 1305.50 L2179.00 1311.45 L2179.00 1323.35 L2168.50 1329.30 L2158.00 1323.35 L2158.00 1311.45 Z" fill="#8d1b40" stroke="#8d1b40" stroke-width="1.2" stroke-linejoin="round"/><path d="M2168.5 1312.6399999999999 L2168.5 1318.828" stroke="#fff" stroke-width="2.6" stroke-linecap="round"/><circle cx="2168.5" cy="1322.874" r="1.5" fill="#fff"/></svg>
<div class="t" style="left:2185.95px;top:1304.82px;font-size:25.84px;font-weight:400;color:#181926;letter-spacing:1.45px;">20</div>
<svg class="a" style="left:2234px;top:1303.7px;" width="27.1" height="27.6" viewBox="2234 1303.7 27.1 27.6"><path d="M2247.55 1307.70 L2257.60 1314.91 L2254.09 1327.80 L2241.01 1327.80 L2237.50 1314.91 Z" fill="#d22d60" stroke="#d22d60" stroke-width="2" stroke-linejoin="round"/><path d="M2247.55 1313.18 L2247.55 1319.228" stroke="#fff" stroke-width="2.6" stroke-linecap="round"/><circle cx="2247.55" cy="1323.116" r="1.5" fill="#fff"/></svg>
<div class="t" style="left:2265.8px;top:1304.15px;font-size:26.63px;font-weight:400;color:#181926;letter-spacing:1px;">12</div>
<svg class="a" style="left:2314.5px;top:1303.7px;" width="27.3" height="27.3" viewBox="2314.5 1303.7 27.3 27.3"><path d="M2328.15 1307.90 L2337.80 1327.00 L2318.50 1327.00 Z" fill="#ee853a" stroke="#ee853a" stroke-width="2.2" stroke-linejoin="round"/><path d="M2328.15 1314.794 L2328.15 1320.332" stroke="#fff" stroke-width="2.4" stroke-linecap="round"/><circle cx="2328.15" cy="1323.74" r="1.4" fill="#fff"/></svg>
<div class="t" style="left:2345.5px;top:1305.16px;font-size:25.44px;font-weight:400;color:#181926;">1</div>
<div class="a" style="left:1789.8px;top:1371px;width:594px;height:120px;background:#fff;border:1.6px solid #e2e3eb;border-radius:7px"></div>
<div class="t" style="left:1835.55px;top:1404.82px;font-size:42.73px;font-weight:400;color:#111218;transform:scaleX(0.99);transform-origin:3.25px 0;-webkit-text-stroke:0.45px #ffffff;">17</div>
<div class="t" style="left:1922.35px;top:1409.65px;font-size:29.94px;font-weight:400;color:#181926;letter-spacing:1.28px;">XXX: Access to sensitive data</div>
</div></div>
<div class="a" style="left:2441.6px;top:1013px;width:28.7px;height:402px;background:#fafafa;border-left:1.5px solid #e6e6ea;border-right:1.5px solid #e6e6ea"></div>
<div class="a" style="left:2449.1px;top:1018.8px;width:16px;height:139.2px;background:#c1c1c1;border-radius:8px"></div>
<div class="a" style="left:2440.8px;top:1304px;width:85px;height:85px;background:#3a80f3;border-radius:50%;box-shadow:0 3px 10px rgba(40,60,120,0.18)"></div>
<svg class="a" style="left:2455px;top:1320px;" width="55" height="52" viewBox="2455 1320 55 52"><defs><clipPath id="fabc"><path d="M2483.00 1325.50 A21.00 21.00 0 1 0 2483.00 1367.50 A21.00 21.00 0 1 0 2483.00 1325.50 Z M2483.00 1337.61 A8.89 8.89 0 1 1 2483.00 1355.39 A8.89 8.89 0 1 1 2483.00 1337.61 Z" fill-rule="evenodd" clip-rule="evenodd"/></clipPath></defs><g clip-path="url(#fabc)"><rect x="2460.00" y="1323.50" width="46.00" height="46.00" fill="#ffffff"/><circle cx="2458.46" cy="1346.50" r="26.36" fill="#3a80f3"/><circle cx="2458.46" cy="1346.50" r="24.47" fill="#ffffff"/><circle cx="2458.46" cy="1346.50" r="21.19" fill="#3a80f3"/><circle cx="2458.46" cy="1346.50" r="19.63" fill="#ffffff"/><circle cx="2458.46" cy="1346.50" r="15.62" fill="#3a80f3"/><circle cx="2458.46" cy="1346.50" r="13.71" fill="#ffffff"/><circle cx="2458.46" cy="1346.50" r="10.16" fill="#3a80f3"/><circle cx="2458.46" cy="1346.50" r="8.25" fill="#ffffff"/></g></svg>
<div class="a" style="left:0px;top:1320px;width:2560px;height:95px;background:linear-gradient(180deg,rgba(30,30,40,0) 0%,rgba(30,30,40,0.025) 45%,rgba(30,30,40,0.085) 100%);pointer-events:none"></div>
</div></body></html>
